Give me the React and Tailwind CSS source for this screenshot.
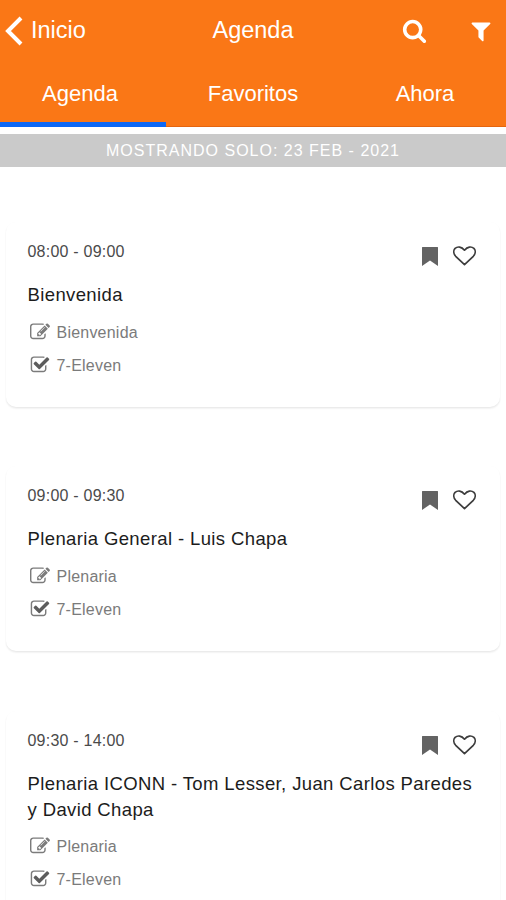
import React, { useState } from 'react'

const sessions = [
  { id: 1, time: '08:00 - 09:00', title: 'Bienvenida', type: 'Bienvenida', sponsor: '7-Eleven' },
  { id: 2, time: '09:00 - 09:30', title: 'Plenaria General - Luis Chapa', type: 'Plenaria', sponsor: '7-Eleven' },
  {
    id: 3,
    time: '09:30 - 14:00',
    title: 'Plenaria ICONN - Tom Lesser, Juan Carlos Paredes y David Chapa',
    type: 'Plenaria',
    sponsor: '7-Eleven'
  }
]

const tabs = [
  { name: 'Agenda', className: 'w-[166px] pr-[6px]' },
  { name: 'Favoritos', className: 'flex-1' },
  { name: 'Ahora', className: 'w-[166px] pl-[4px]' }
]

const Icon = ({ d, className, children }) => (
  <svg viewBox="0 0 1792 1792" fill="currentColor" className={className}>
    <path d={d} />
    {children}
  </svg>
)

const searchPath = 'M1216 832q0-185-131.5-316.5t-316.5-131.5-316.5 131.5-131.5 316.5 131.5 316.5 316.5 131.5 316.5-131.5 131.5-316.5zm512 832q0 52-38 90t-90 38q-54 0-90-38l-343-342q-179 124-399 124-143 0-273.5-55.5t-225-150-150-225-55.5-273.5 55.5-273.5 150-225 225-150 273.5-55.5 273.5 55.5 225 150 150 225 55.5 273.5q0 220-124 399l343 343q37 37 37 90z'
const filterPath = 'M1595 295q17 41-14 70l-493 493v742q0 42-39 59-13 5-25 5-27 0-45-19l-256-256q-19-19-19-45v-486l-493-493q-31-29-14-70 17-39 59-39h1280q42 0 59 39z'
const editPath = 'M888 1184l116-116-152-152-116 116v56h96v96h56zm440-720q-16-16-33 1l-350 350q-17 17-1 33t33-1l350-350q17-17 1-33zm80 594v190q0 119-84.5 203.5t-203.5 84.5h-832q-119 0-203.5-84.5t-84.5-203.5v-832q0-119 84.5-203.5t203.5-84.5h832q63 0 117 25 15 7 18 23 3 17-9 29l-49 49q-14 14-32 8-23-6-45-6h-832q-66 0-113 47t-47 113v832q0 66 47 113t113 47h832q66 0 113-47t47-113v-126q0-13 9-22l64-64q15-15 35-7t20 29zm-96-738l288 288-672 672h-288v-288zm444 132l-92 92-288-288 92-92q28-28 68-28t68 28l152 152q28 28 28 68t-28 68z'
const boxPath = 'M1472 930v318q0 119-84.5 203.5t-203.5 84.5h-832q-119 0-203.5-84.5t-84.5-203.5v-832q0-119 84.5-203.5t203.5-84.5h832q63 0 117 25 15 7 18 23 3 17-9 29l-49 49q-10 10-23 10-3 0-9-2-23-6-45-6h-832q-66 0-113 47t-47 113v832q0 66 47 113t113 47h832q66 0 113-47t47-113v-254q0-13 9-22l64-64q10-10 23-10 6 0 12 3 20 8 20 29z'
const tickPath = 'M1703 441l-814 814q-24 24-57 24t-57-24l-430-430q-24-24-24-57t24-57l110-110q24-24 57-24t57 24l263 263 647-647q24-24 57-24t57 24l110 110q24 24 24 57t-24 57z'

const SessionCard = ({ session }) => (
  <div className="mx-1.5 rounded-[10px] bg-white pt-5 pr-[21px] pb-[29px] pl-[21.500px] shadow-[0_1px_2px_rgba(0,0,0,0.06),0_2px_2px_rgba(0,0,0,0.04)]">
    <div className="flex h-[26px] items-start justify-between">
      <p className="text-base leading-5 tracking-[0.22px] text-[#4a4a4a]">{session.time}</p>
      <div className="mr-[3px] flex gap-[15px] pt-1">
        <svg viewBox="0 0 16 19" className="mt-px h-[19px] w-4 text-[#636363]" fill="currentColor">
          <path d="M0.500 0H15.500Q16 0 16 0.500V19L8 13.500L0 19V0.500Q0 0 0.500 0Z" />
        </svg>
        <svg viewBox="0 0 23 20" className="h-5 w-[23px] text-[#3d3d3d]" fill="none" stroke="currentColor" strokeWidth="1.7" strokeLinejoin="round">
          <path d="M11.500 18.700L2.700 10.300C.3 7.600.3 4.300 2.100 2.400C4.700.1 8.500.6 11.500 4.200C14.500.6 18.300.1 20.900 2.400C22.700 4.300 22.700 7.600 20.300 10.300Z" />
        </svg>
      </div>
    </div>
    <h2 className="mt-[14px] text-[18.500px] leading-[26px] tracking-[0.38px] text-[#1c1c1c]">{session.title}</h2>
    <div className="mt-3 flex h-[25px] items-center gap-[6.500px] pl-[2.500px] text-[#7b7b7b]">
      <Icon d={editPath} className="mb-[2px] h-5 w-5" />
      <span className="text-base tracking-[0.22px]">{session.type}</span>
    </div>
    <div className="mt-2 flex h-[25px] items-center gap-[6.500px] pl-[2.500px] text-[#7b7b7b]">
      <Icon d={boxPath} className="mb-[2px] h-5 w-5">
        <path d={tickPath} className="text-[#5c5c5c]" fill="currentColor" />
      </Icon>
      <span className="text-base tracking-[0.22px]">{session.sponsor}</span>
    </div>
  </div>
)

const App = () => {
  const [activeTab, setActiveTab] = useState('Agenda')

  return (
    <div className="h-screen overflow-hidden bg-white font-['Liberation_Sans',Arial,sans-serif]">
      <header className="h-[127px] border-b border-[#e5650f] bg-[#fa7716] text-white">
        <div className="grid h-[61px] grid-cols-3 items-center text-[23.500px]">
          <button className="flex items-center gap-[8px] pl-[5px]">
            <svg viewBox="0 0 18 30" className="h-[30px] w-[18px]" fill="none" stroke="currentColor" strokeWidth="4">
              <path d="M16 2L3 15L16 28" />
            </svg>
            Inicio
          </button>
          <h1 className="text-center">Agenda</h1>
          <div className="flex items-center justify-end gap-[42px] pr-[13px]">
            <Icon d={searchPath} className="h-[25px] w-[25px]" />
            <Icon d={filterPath} className="h-6 w-6" />
          </div>
        </div>
        <nav className="-mb-px flex h-[66px] text-[22px]">
          {tabs.map((tab) => (
            <button
              key={tab.name}
              onClick={() => setActiveTab(tab.name)}
              className={`border-b-[5px] pt-1 ${tab.className} ${
                activeTab === tab.name ? 'border-[#0d68f5]' : 'border-transparent'
              }`}
            >
              {tab.name}
            </button>
          ))}
        </nav>
      </header>

      <div className="mt-[7px] flex h-[33px] items-center justify-center bg-[#cacaca] text-base tracking-[1px] text-white">
        MOSTRANDO SOLO: 23 FEB - 2021
      </div>

      <div className="mt-[55px] flex flex-col gap-[59.250px]">
        {sessions.map((session) => (
          <SessionCard key={session.id} session={session} />
        ))}
      </div>
    </div>
  )
}

export default App
